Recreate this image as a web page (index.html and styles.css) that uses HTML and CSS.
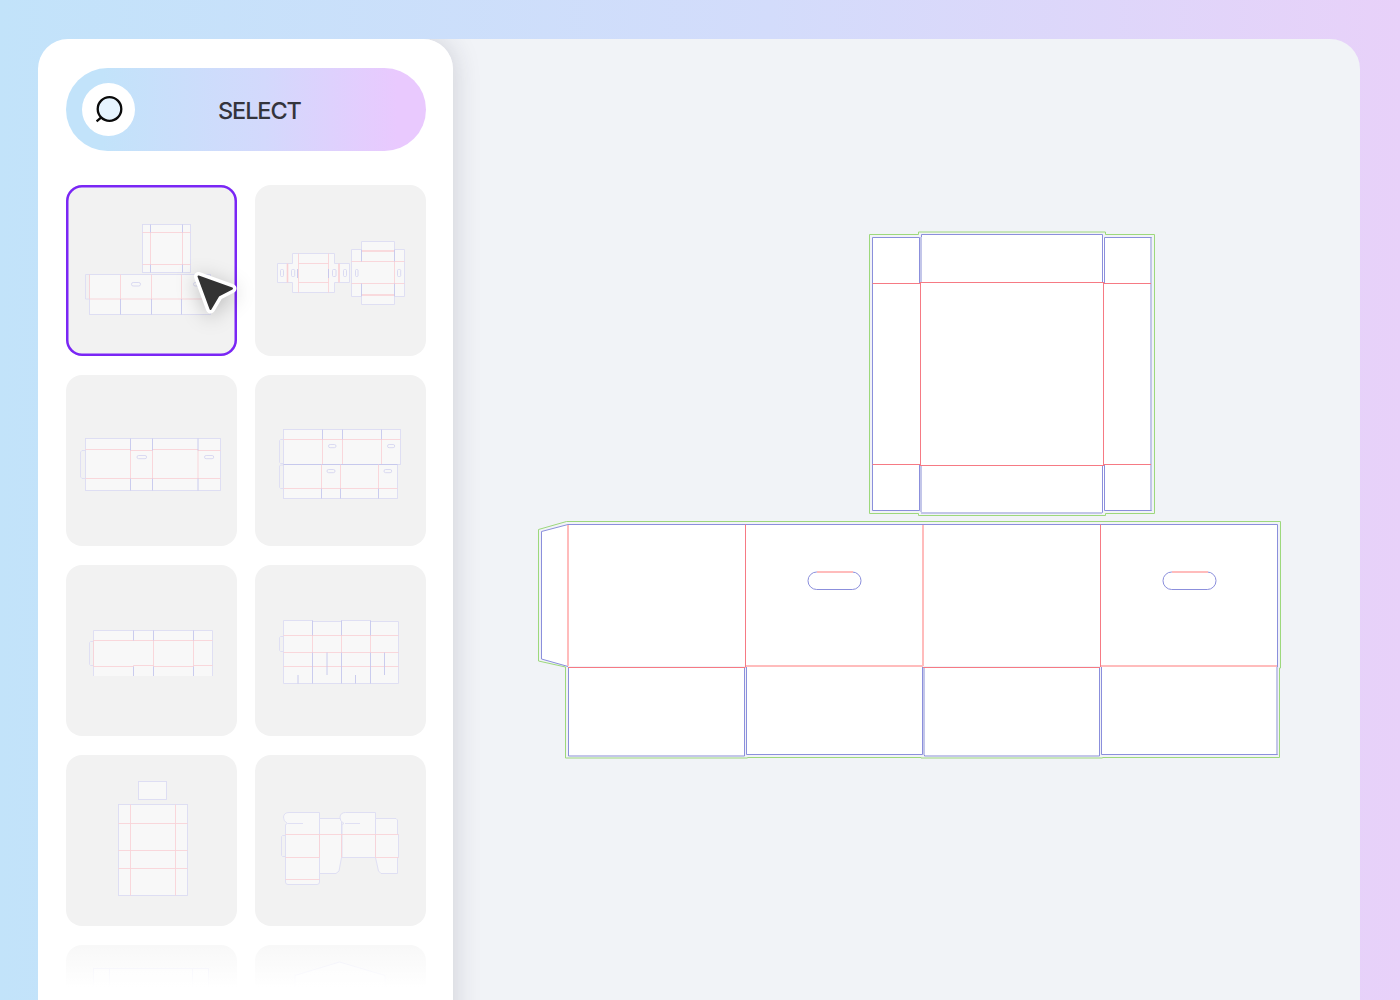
FILE: index.html
```html
<!DOCTYPE html>
<html lang="en">

<head>
    <meta charset="UTF-8">
    <meta name="viewport" content="width=device-width, initial-scale=1.0">
    <title>Select dieline</title>
    <link rel="stylesheet" href="styles.css">
</head>

<body>
    <div class="page">
        <aside class="panel">
            <div class="select-bar">
                <span class="search-icon">
                    <svg width="32" height="32" viewBox="0 0 32 32">
                        <circle cx="16.5" cy="15" r="11.8" fill="#e6f4fe" stroke="#0b0b0b" stroke-width="2.3" />
                        <path d="M8 23.6 L3.6 27.4" fill="none" stroke="#0b0b0b" stroke-width="2.3" />
                    </svg>
                </span>
                <span class="select-label">SELECT</span>
            </div>

            <div class="grid">
                <div class="card selected">
                    <svg class="art" viewBox="0 0 171 171">
                        <rect class="cut" x="76.5" y="39.5" width="48" height="48" />
                        <path class="fold" d="M76.5 47.5H124.5M76.5 79.5H124.5M84.5 47.5V79.5M116.5 47.5V79.5" />
                        <path class="crease" d="M84.5 39.5V47.5M116.5 39.5V47.5M84.5 79.5V87.5M116.5 79.5V87.5" />
                        <path class="open" d="M23.5 89.5H19.5V114H23.5" />
                        <rect class="cut" x="23.5" y="89.5" width="121" height="40" />
                        <path class="fold" d="M23.5 89.5V114M54.5 89.5V114M85.5 89.5V114M115.5 89.5V114M23.5 114H144.5" />
                        <path class="crease" d="M54.5 114V129.5M85.5 114V129.5M115.5 114V129.5" />
                        <rect class="slot" x="65.5" y="97.5" width="9" height="3.5" rx="1.7" />
                        <rect class="slot" x="127.5" y="97.5" width="9" height="3.5" rx="1.7" />
                    </svg>
                    <svg class="cursor" width="50" height="48" viewBox="190 268 50 48">
                        <path d="M198.5 276.5 L232 288.5 L218.5 295.5 L210.5 309 Z" fill="#fff" stroke="#fff" stroke-width="9" stroke-linejoin="round" />
                        <path d="M198.5 276.5 L232 288.5 L218.5 295.5 L210.5 309 Z" fill="#333" stroke="#333" stroke-width="2" stroke-linejoin="round" />
                    </svg>
                </div>

                <div class="card">
                    <svg class="art" viewBox="0 0 171 171">
                        <path class="cut" d="M37.5 68.5H79.5V78.5H94.5V97.5H79.5V107.5H37.5V97.5H22.5V78.5H37.5Z" />
                        <path class="fold" d="M43.5 68.5V107.5M73.5 68.5V107.5M43.5 78.5H73.5M43.5 97.5H73.5" />
                        <path class="fold-bold" d="M32.5 78.5V97.5M84 78.5V97.5" />
                        <path class="crease" d="M42.5 84V93M73.5 84V93" />
                        <rect class="slot" x="25.5" y="84.5" width="3" height="7" rx="1" />
                        <rect class="slot" x="36.5" y="84.5" width="3.2" height="7" rx="1" />
                        <rect class="slot" x="77.5" y="84.5" width="3.5" height="7" rx="1" />
                        <rect class="slot" x="88.5" y="84.5" width="3" height="7" rx="1" />
                        <path class="cut" d="M106.5 56.5H139.5V64.5H149.5V111.5H139.5V119.5H106.5V111.5H96.5V64.5H106.5Z" />
                        <path class="fold" d="M96.5 76.5H149.5M96.5 98.5H149.5M139.5 76.5V98.5" />
                        <path class="fold-bold" d="M106.5 66H139.5M106.5 110H139.5" />
                        <path class="crease" d="M106.5 64.5V76.5M106.5 98.5V111.5M139.5 64.5V76.5M139.5 98.5V111.5" />
                        <rect class="slot" x="100.5" y="84.5" width="2.5" height="7" rx="1" />
                        <rect class="slot" x="142.5" y="84.5" width="3.2" height="7" rx="1" />
                    </svg>
                </div>

                <div class="card">
                    <svg class="art" viewBox="0 0 171 171">
                        <path class="open" d="M19.5 75.5H16L14.5 77V102L16 103.5H19.5" />
                        <rect class="cut" x="19.5" y="63.5" width="135" height="52" />
                        <path class="fold" d="M19.5 74.5H64.5V75.5H86.5V74.5H132V75.5H154.5M19.5 103.5H154.5M64.5 75.5V103.5M86.5 75.5V103.5M132 75.5V103.5" />
                        <path class="crease" d="M64.5 63.5V75.5M64.5 103.5V115.5M86.5 63.5V75.5M86.5 103.5V115.5M132 63.5V75.5M132 103.5V115.5" />
                        <rect class="slot" x="71" y="80.5" width="9.6" height="3.2" rx="1.6" />
                        <rect class="slot" x="138.5" y="80.5" width="9.2" height="3.2" rx="1.6" />
                    </svg>
                </div>

                <div class="card">
                    <svg class="art" viewBox="0 0 171 171">
                        <rect class="cut" x="28.5" y="54.5" width="117" height="35" />
                        <path class="open" d="M28.5 64.5H25.5L24.5 65.5V87.5L25.5 88.5H28.5" />
                        <path class="fold" d="M28.5 64.5H145.5M67.5 64.5V89.5M87.5 64.5V89.5M126.5 64.5V89.5" />
                        <path class="crease" d="M67.5 54.5V64.5M87.5 54.5V64.5M126.5 54.5V64.5" />
                        <rect class="cut" x="28.5" y="89.5" width="114" height="34" />
                        <path class="open" d="M28.5 90H25.5L24.5 91V112.5L25.5 113.5H28.5" />
                        <path class="crease" d="M28.5 89.5H142.5" />
                        <path class="fold" d="M28.5 113.5H142.5M66.5 89.5V113.5M85.5 89.5V113.5M123.5 89.5V113.5" />
                        <path class="crease" d="M66.5 113.5V123.5M85.5 113.5V123.5M123.5 113.5V123.5" />
                        <rect class="slot" x="73.5" y="69.5" width="7.5" height="3.2" rx="1.6" />
                        <rect class="slot" x="132.5" y="69.5" width="7.2" height="3.2" rx="1.6" />
                        <rect class="slot" x="72" y="94.5" width="8" height="3.2" rx="1.6" />
                        <rect class="slot" x="129" y="94.5" width="7.7" height="3.2" rx="1.6" />
                    </svg>
                </div>

                <div class="card">
                    <svg class="art" viewBox="0 0 171 171">
                        <rect class="panel-fill" x="27.5" y="65.5" width="119" height="45.5" />
                        <path class="open" d="M27.5 76.5H24.5L23.5 77.5V99.5L24.5 100.5H27.5" />
                        <path class="open" d="M27.5 111V65.5H146.5V111" />
                        <path class="fold" d="M27.5 75.5H146.5M27.5 101.5H67.5V100.5H87.5V101.5H127.5V100.5H146.5M27.5 75.5V101.5M87.5 75.5V101.5M127.5 75.5V101.5" />
                        <path class="crease" d="M67.5 65.5V75.5M67.5 101.5V111M87.5 65.5V75.5M87.5 101.5V111M127.5 65.5V75.5M127.5 101.5V111" />
                    </svg>
                </div>

                <div class="card">
                    <svg class="art" viewBox="0 0 171 171">
                        <path class="open" d="M28.5 71.5H25.5L24.5 72.5V85.5L25.5 86.5H28.5" />
                        <path class="cut" d="M28.5 55.5H57.5V56.5H86.5V55.5H115.5V56.5H143.5V118.5H28.5Z" />
                        <path class="fold" d="M28.5 70.5H143.5M28.5 87.5H143.5M28.5 101.5H143.5M57.5 70.5V87.5M86.5 70.5V87.5M115.5 70.5V87.5" />
                        <path class="crease" d="M57.5 55.5V70.5M57.5 87.5V118.5M86.5 55.5V70.5M86.5 87.5V118.5M115.5 55.5V70.5M115.5 87.5V118.5M72 87.5V110M129.5 87.5V110M43 110V118.5M100.5 110V118.5" />
                    </svg>
                </div>

                <div class="card">
                    <svg class="art" viewBox="0 0 171 171">
                        <rect class="cut" x="72.5" y="26.5" width="28" height="18" />
                        <rect class="cut" x="52.5" y="49.5" width="69" height="91" />
                        <path class="fold" d="M52.5 68.5H121.5M52.5 95.5H121.5M52.5 113.5H121.5M64.5 49.5V140.5M109.5 49.5V140.5" />
                    </svg>
                </div>

                <div class="card">
                    <svg class="art" viewBox="0 0 171 171">
                        <path class="open" d="M30.5 80.5H27.5L26.5 81.5V100.5L27.5 101.5H30.5" />
                        <path class="cut" d="M30.5 69.5L32.5 68.5Q28 66 28.5 62Q29 57.5 34 57.5H64.5V127Q64.5 129.5 62 129.5H33Q30.5 129.5 30.5 127Z" />
                        <path class="cut" d="M64.5 63.5H85.5L86.5 65V102.5L84 116L81 118.5H64.5Z" />
                        <path class="cut" d="M87 69.5L89 68.5Q84.5 66 85 62Q85.5 57.5 90.5 57.5H120.5V102.5H87Z" />
                        <path class="cut" d="M120.5 63.5H141L142.5 65V79.5H143.5V102.5H142.5V118.5H126L123.5 116L120.5 102.5Z" />
                        <path class="fold" d="M30.5 79.5H143.5M30.5 102.5H64.5M120.5 102.5H143.5M64.5 79.5V102.5M86.5 79.5V102.5M120.5 79.5V102.5M30.5 124.5H64.5" />
                        <path class="open" d="M33 68.5H48M90 68.5H105" />
                    </svg>
                </div>

                <div class="card">
                    <svg class="art" viewBox="0 0 171 171">
                        <rect class="cut" x="27.5" y="23.5" width="115" height="60" />
                        <path class="open" d="M43.5 23.5V83M126.5 23.5V83" />
                    </svg>
                </div>

                <div class="card">
                    <svg class="art" viewBox="0 0 171 171">
                        <path class="cut" d="M40 30.5 L84.5 17 L130 30.5 V80 H40Z" />
                    </svg>
                </div>
            </div>
            <div class="fade"></div>
        </aside>

        <main class="canvas">
            <svg class="dieline" width="760" height="540" viewBox="530 225 760 540">
                <!-- outer bleed -->
                <path class="bleed" d="M869.5 234.5H918.5V232H1105.5V234.5H1154.5V513.5H1105.5V515.5H918.5V513.5H869.5Z" />
                <path class="bleed" d="M538.5 529.5L566.5 521.5H1280.5V668H1279.5V757.5H1102.5V758H921V757.5H747.5V758H565.5V667L538.5 661Z" />

                <!-- lid -->
                <rect class="sheet" x="872.5" y="237.5" width="279" height="273" />
                <rect class="sheet" x="921" y="234.5" width="182" height="278" />
                <path class="cut-line" d="M919.5 283V237.5H872.5V510.5H919.5V465" />
                <path class="cut-line" d="M1104.5 283V237.5H1151.5V510.5H1104.5V465" />
                <path class="cut-line" d="M921.5 283V234.5H1102.5V283" />
                <path class="cut-line" d="M921.5 465V512.5H1102.5V465" />
                <path class="pale-cut" d="M921 237V283M921 465V512M921 513H1102M1151 238V510" />
                <rect class="fold-line" x="920.5" y="282.5" width="183" height="183" />
                <path class="fold-line" d="M872.5 283.5H920M872.5 464.5H920M1104 283.5H1151M1104 464.5H1151" />

                <!-- body -->
                <path class="sheet" d="M541.5 531.5L568 524.5H1277.5V666H568L541.5 659Z" />
                <rect class="sheet" x="568.5" y="667" width="176" height="89" />
                <rect class="sheet" x="746.5" y="666" width="176" height="88.5" />
                <rect class="sheet" x="924.5" y="667" width="175" height="89" />
                <rect class="sheet" x="1101.5" y="666" width="176" height="88.5" />
                <path class="cut-line" d="M568 666.5L541.5 659V531.5L568 524.5H1277.5V666.5" />
                <path class="cut-line" d="M568.5 667.5V756H744.5V667.5" />
                <path class="cut-line" d="M746.5 666V754.5H922.5V666" />
                <path class="cut-line" d="M924.5 667V756H1099.5V667" />
                <path class="cut-line" d="M1101.5 666V754.5H1277.5V666" />
                <path class="pale-cut" d="M569 756H744M924 667V755M925 756H1099M1277 667V754" />
                <path class="fold-line" d="M745.5 524.5V667M1100.5 524.5V667M568 667.5H745.5M923 667.5H1100" />
                <path class="pale-fold" d="M568 525V666M923 525V666M746 666H923M1101 666H1277" />
                <rect class="cut-line" x="808" y="572" width="53" height="17.5" rx="8.7" />
                <rect class="cut-line" x="1163" y="572" width="53" height="17.5" rx="8.7" />
                <path class="pale-fold" d="M817 572H853M1172 572H1208" />
            </svg>
        </main>
    </div>
</body>

</html>
```

FILE: styles.css
```css
* {
    box-sizing: border-box;
}

body {
    margin: 0;
    height: 1000px;
    overflow: hidden;
    font-family: "Inter", "Liberation Sans", sans-serif;
    background: linear-gradient(90deg, #c2e3fa 0%, #d3dcfb 55%, #e8d1f9 100%);
}

.page {
    display: flex;
    height: 1000px;
    padding: 39px 40px 0 38px;
}

.panel {
    position: relative;
    z-index: 1;
    flex: none;
    width: 415px;
    height: 961px;
    padding: 29px 27px 0 28px;
    overflow: hidden;
    background: white;
    border-radius: 30px 30px 0 0;
}

.select-bar {
    display: flex;
    align-items: center;
    gap: 83px;
    height: 83px;
    padding-left: 16px;
    border-radius: 42px;
    background: linear-gradient(90deg, #c2e3fa 10%, #d3d9fc 55%, #e9c9fe 92%);
}

.search-icon {
    display: flex;
    align-items: center;
    justify-content: center;
    width: 53px;
    height: 53px;
    border-radius: 50%;
    background: white;
}

.select-label {
    padding-top: 2px;
    font-size: 23.5px;
    font-weight: 500;
    letter-spacing: -1.1px;
    color: #34343c;
}

.grid {
    display: grid;
    grid-template-columns: 171px 171px;
    grid-auto-rows: 171px;
    gap: 19px 17.5px;
    margin-top: 33.5px;
}

.card {
    position: relative;
    border-radius: 16px;
    background: #f2f2f2;
}

.card.selected {
    box-shadow: inset 0 0 0 2.5px #7a26f5;
}

.art {
    display: block;
    width: 171px;
    height: 171px;
}

.art .cut {
    fill: #f8f8f8;
    stroke: #dcdcf3;
    stroke-width: 0.9;
}

.art .slot {
    fill: #f8f8f8;
    stroke: #d6d6f1;
    stroke-width: 0.9;
}

.art .panel-fill {
    fill: #f8f8f8;
}

.art .open {
    fill: none;
    stroke: #dcdcf3;
    stroke-width: 0.9;
}

.art .fold {
    fill: none;
    stroke: #f8d3d7;
    stroke-width: 0.9;
}

.art .fold-bold {
    fill: none;
    stroke: #f9cfd3;
    stroke-width: 1.6;
}

.art .crease {
    fill: none;
    stroke: #c4c6ec;
    stroke-width: 0.9;
}

.cursor {
    position: absolute;
    left: 124px;
    top: 83px;
    overflow: visible;
    filter: drop-shadow(0 4px 10px rgba(0, 0, 0, 0.22));
}

.fade {
    position: absolute;
    left: 0;
    right: 0;
    bottom: 0;
    height: 70px;
    background: linear-gradient(180deg, rgba(255, 255, 255, 0) 0%, rgba(255, 255, 255, 0.45) 21%, rgba(255, 255, 255, 0.75) 54%, #fff 82%);
}

.canvas {
    position: relative;
    flex: 1;
    margin-left: -60px;
    padding: 186px 0 0 137px;
    border-radius: 30px 30px 0 0;
    background: #f1f3f7;
    overflow: hidden;
}

/* panel shadow, only falls on the canvas */
.canvas::before {
    content: "";
    position: absolute;
    left: 0;
    top: 0;
    bottom: -60px;
    width: 60px;
    border-radius: 0 30px 0 0;
    box-shadow: 0 0 28px rgba(40, 40, 60, 0.18);
}

.dieline {
    display: block;
}

.dieline path,
.dieline rect {
    fill: none;
    stroke-width: 1;
}

.dieline .bleed {
    stroke: #9dd87c;
}

.dieline .sheet {
    fill: white;
    stroke: none;
}

.dieline .cut-line {
    stroke: #8b8fdc;
}

.dieline .pale-cut {
    stroke: #c3c6e9;
    stroke-width: 2;
}

.dieline .fold-line {
    stroke: #f67a84;
}

.dieline .pale-fold {
    stroke: #ffbcbc;
    stroke-width: 2;
}
```
